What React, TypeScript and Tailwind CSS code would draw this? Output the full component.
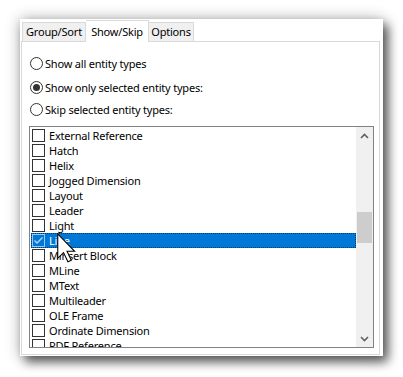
import React from "react";

const items = [
  "External Reference",
  "Hatch",
  "Helix",
  "Jogged Dimension",
  "Layout",
  "Leader",
  "Light",
  "Line",
  "Minsert Block",
  "MLine",
  "MText",
  "Multileader",
  "OLE Frame",
  "Ordinate Dimension",
  "PDF Reference",
];

function Radio({ checked, label }: { checked?: boolean; label: string }) {
  return (
    <div className="flex h-[16px] items-center">
      <div className="flex h-[13px] w-[13px] items-center justify-center rounded-full border border-[#333333] bg-white">
        {checked && <div className="h-[7px] w-[7px] rounded-full bg-[#333333]" />}
      </div>
      <span className="ml-[2px] leading-none">{label}</span>
    </div>
  );
}

function Row({ label, selected }: { label: string; selected?: boolean }) {
  return (
    <div
      className={
        selected
          ? "flex h-[15px] items-center bg-[#0078d7] text-white outline outline-1 -outline-offset-1 outline-dotted outline-[#0b3a66]"
          : "flex h-[15px] items-center"
      }
    >
      <div
        className={
          selected
            ? "ml-[1px] flex h-[13px] w-[13px] items-center justify-center border border-[#9cc7ee]"
            : "ml-[1px] h-[13px] w-[13px] border border-[#333333] bg-white"
        }
      >
        {selected && (
          <svg width="11" height="11" viewBox="0 0 11 11">
            <path d="M1.5 5.5 L4 8 L9.5 2.5" fill="none" stroke="#b6d6f4" strokeWidth="1.4" />
          </svg>
        )}
      </div>
      <span className="ml-[4px] whitespace-nowrap leading-[15px]">{label}</span>
    </div>
  );
}

export default function App() {
  return (
    <div
      className="relative h-[377px] w-[403px] overflow-hidden bg-white text-[11px] tracking-[-0.2px] text-black"
      style={{ fontFamily: '"Noto Sans", sans-serif' }}
    >
      <div className="ml-[20px] mt-[19px] flex h-[337px] w-[363px] flex-col bg-white pb-[1px] pl-[1px] pr-[3px] pt-[1px] shadow-[5px_6px_10px_rgba(0,0,0,0.6),0_0_14px_rgba(0,0,0,0.3)]">
        {/* tabs */}
        <div className="relative z-10 flex h-[21px] items-end pl-[1px]">
          <div className="flex h-[19px] w-[64px] items-center justify-center border border-b-0 border-[#d9d9d9] bg-[#f0f0f0]">
            Group/Sort
          </div>
          <div className="-mb-px flex h-[22px] w-[63px] items-start justify-center border border-b-0 border-l-0 border-[#d9d9d9] bg-white pt-[3px]">
            Show/Skip
          </div>
          <div className="flex h-[19px] w-[45px] items-center justify-center border border-b-0 border-l-0 border-[#d9d9d9] bg-[#f0f0f0]">
            Options
          </div>
        </div>
        {/* panel */}
        <div className="flex flex-1 flex-col border border-[#d9d9d9] pl-[8px] pt-[13px]">
          <div className="flex flex-col">
            <Radio label="Show all entity types" />
            <div className="h-[8px]" />
            <Radio checked label="Show only selected entity types:" />
            <div className="h-[6px]" />
            <Radio label="Skip selected entity types:" />
          </div>
          <div className="-ml-[1px] mt-[9px] flex h-[222px] w-[345px] border border-[#828282] bg-white">
            <div className="flex-1 overflow-hidden pl-[1px] pt-[1px]">
              {items.map((it) => (
                <Row key={it} label={it} selected={it === "Line"} />
              ))}
            </div>
            <div className="flex w-[17px] flex-col bg-[#f0f0f0]">
              <div className="flex h-[17px] items-center justify-center">
                <svg width="9" height="6" viewBox="0 0 9 6">
                  <path d="M1 5 L4.5 1.5 L8 5" fill="none" stroke="#606060" strokeWidth="1.6" />
                </svg>
              </div>
              <div className="h-[68px]" />
              <div className="mx-[1px] h-[31px] bg-[#cdcdcd]" />
              <div className="flex-1" />
              <div className="flex h-[17px] items-center justify-center">
                <svg width="9" height="6" viewBox="0 0 9 6">
                  <path d="M1 1 L4.5 4.5 L8 1" fill="none" stroke="#606060" strokeWidth="1.6" />
                </svg>
              </div>
            </div>
          </div>
        </div>
      </div>
      {/* cursor */}
      <svg
        className="absolute left-[57px] top-[233px]"
        width="19"
        height="30"
        viewBox="0 0 12.5 19.5"
      >
        <path
          d="M0.5 0.5 L0.5 16.5 L4.3 12.8 L7.2 18.8 L9.4 17.8 L6.6 11.9 L11.6 11.9 Z"
          fill="#ffffff"
          stroke="#000000"
          strokeWidth="0.7"
          strokeLinejoin="miter"
        />
      </svg>
    </div>
  );
}
